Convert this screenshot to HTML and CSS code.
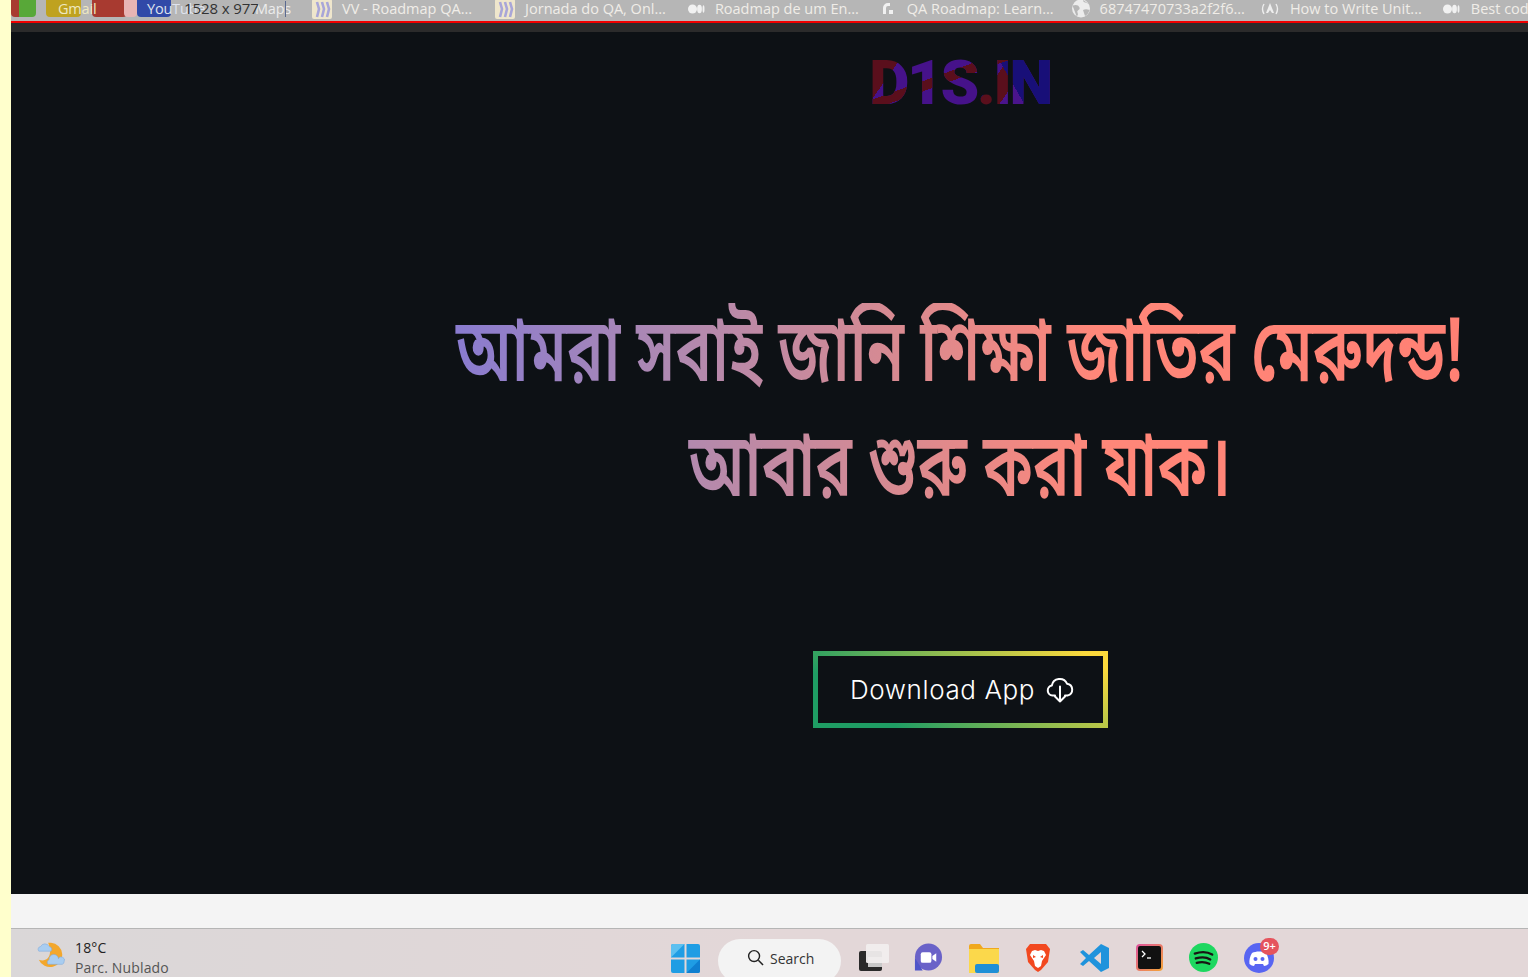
FILE: index.html
```html
<!DOCTYPE html>
<html lang="bn">
<head>
<meta charset="utf-8">
<title>D1S.IN</title>
<link rel="stylesheet" href="styles.css">
</head>
<body>
<div class="edge"></div>
<div class="window">
  <nav class="bookmarks">
    <span class="tile tile-green"></span>
    <span class="tile tile-yellow"></span>
    <span class="tile tile-red"></span>
    <span class="tile tile-pink"></span>
    <span class="tile tile-blue"></span>
    <span class="bm-label bm-gmail">Gmail</span>
    <span class="bm-label bm-youtube">YouTube</span>
    <span class="bm-label bm-maps">Maps</span>
    <span class="size-tip">1528 x 977</span>
    <span class="caret"></span>
    <a class="bm bm-first">
      <svg class="bm-icon" viewBox="0 0 20 20"><rect width="20" height="20" rx="2" fill="#efe6cc"/><path d="M5 3l2 7-2 8M10 3l2 7-2 8M15 3l2 7-2 8" fill="none" stroke="#a9a6d8" stroke-width="2.600"/></svg>
      <span class="bm-text">VV - Roadmap QA...</span>
    </a>
    <a class="bm bm-second">
      <svg class="bm-icon" viewBox="0 0 20 20"><rect width="20" height="20" rx="2" fill="#efe6cc"/><path d="M5 3l2 7-2 8M10 3l2 7-2 8M15 3l2 7-2 8" fill="none" stroke="#a9a6d8" stroke-width="2.600"/></svg>
      <span class="bm-text">Jornada do QA, Onl...</span>
    </a>
    <a class="bm bm-medium">
      <svg class="bm-icon" viewBox="0 0 20 20"><circle cx="5.500" cy="10" r="4.500" fill="#f1f1f1"/><ellipse cx="12.500" cy="10" rx="2.400" ry="4.200" fill="#f1f1f1"/><ellipse cx="16.500" cy="10" rx="1" ry="3.800" fill="#f1f1f1"/></svg>
      <span class="bm-text">Roadmap de um En...</span>
    </a>
    <a class="bm bm-rm">
      <svg class="bm-icon" viewBox="0 0 20 20"><path d="M2 15V9a5 5 0 0 1 5-5h2v3H7a2 2 0 0 0-2 2v6z" fill="#f1f1f1"/><rect x="8" y="11" width="4" height="4" fill="#f1f1f1"/></svg>
      <span class="bm-text">QA Roadmap: Learn...</span>
    </a>
    <a class="bm bm-globe">
      <svg class="bm-icon" viewBox="0 0 20 20"><circle cx="10" cy="9.500" r="9" fill="#ececec"/><path d="M1.500 6.500c3-1 6-1 7 2s-3 2-2 5 0 3-1 3.500M12 1c0 3 4 2.500 6 4M12 11c2-1 4-1 6.500 0-1 3-2 5-4.500 6z" fill="#b6b6b6"/></svg>
      <span class="bm-text">68747470733a2f2f6...</span>
    </a>
    <a class="bm bm-angular">
      <svg class="bm-icon" viewBox="0 0 20 20"><path d="M4 5q-3 5 0 10M16 5q3 5 0 10" fill="none" stroke="#eee" stroke-width="1.400"/><path d="M10 4l-4 10h2l2-3 2 3h2z" fill="#eee"/></svg>
      <span class="bm-text">How to Write Unit...</span>
    </a>
    <a class="bm bm-last">
      <svg class="bm-icon" viewBox="0 0 20 20"><circle cx="5.500" cy="10" r="4.500" fill="#f1f1f1"/><ellipse cx="12.500" cy="10" rx="2.400" ry="4.200" fill="#f1f1f1"/><ellipse cx="16.500" cy="10" rx="1" ry="3.800" fill="#f1f1f1"/></svg>
      <span class="bm-text">Best cod</span>
    </a>
  </nav>
  <div class="toolbar-strip"></div>
  <main class="page">
    <div class="spacer"></div>
    <section class="hero">
      <div class="logo">D1S.IN</div>
      <h1 class="headline">আমরা সবাই জানি শিক্ষা জাতির মেরুদন্ড!<br>আবার শুরু করা যাক।</h1>
      <a class="download">
        <span>Download App</span>
        <svg class="cloud" viewBox="0 0 28 28"><path d="M9 19.500H6.500a5 5 0 0 1-.7-9.900A8 8 0 0 1 21 7.700a6 6 0 0 1 .5 11.800H19" fill="none" stroke="#fff" stroke-width="2" stroke-linecap="round" stroke-linejoin="round"/><path d="M14 10.500v15M9 20.500l5 5 5-5" fill="none" stroke="#fff" stroke-width="2" stroke-linecap="round" stroke-linejoin="round"/></svg>
      </a>
    </section>
  </main>
  <div class="status-strip"></div>
  <footer class="taskbar">
    <div class="weather">
      <svg class="weather-icon" viewBox="0 0 32 32"><path d="M16 4a13 13 0 1 1-13 18c7 3 16-2 10-18z" fill="#f3a72c"/><g fill="#a9cdf0" stroke="#7ea9dc" stroke-width=".6"><path d="M3 13a3 3 0 0 1 2-5 5 5 0 0 1 9 0 3 3 0 0 1 2 5z"/><path d="M13 27a3 3 0 0 1 1-5 5 5 0 0 1 10-1 3 3 0 0 1 6 3 3 3 0 0 1-2 3z"/></g></svg>
      <div class="weather-text">
        <div class="temp">18°C</div>
        <div class="sky">Parc. Nublado</div>
      </div>
    </div>
    <div class="apps">
      <svg class="app app-win" viewBox="0 0 29 29"><path d="M0 2a2 2 0 0 1 2-2h11.500v13.500H0z" fill="#1f9de4"/><path d="M0 13.500V2a2 2 0 0 1 2-2h11.500z" fill="#5cc0f0"/><path d="M15.500 0H27a2 2 0 0 1 2 2v11.500H15.500z" fill="#1f9de4"/><path d="M0 15.500h13.500V29H2a2 2 0 0 1-2-2z" fill="#1f9de4"/><path d="M15.500 15.500H29V27a2 2 0 0 1-2 2H15.500z" fill="#1f9de4"/><path d="M29 15.500V27a2 2 0 0 1-2 2H15.500z" fill="#0f7fd0"/></svg>
      <div class="search">
        <svg class="search-icon" viewBox="0 0 18 18"><circle cx="7.500" cy="7.500" r="5.800" fill="none" stroke="#222" stroke-width="1.500"/><path d="M12 12l5 5" stroke="#222" stroke-width="1.600"/></svg>
        <span>Search</span>
      </div>
      <svg class="app app-views" viewBox="0 0 30 30"><rect x="0" y="8" width="23" height="20" rx="2" fill="#2a2a2a"/><path d="M9 24V14h14v10z" fill="#c8c8c8"/><rect x="7" y="1" width="23" height="19" rx="1.500" fill="#f1eeee" opacity=".95"/></svg>
      <svg class="app app-meet" viewBox="0 0 30 30"><circle cx="15" cy="14" r="14" fill="#6a62c8"/><path d="M1 15v13h8z" fill="#4f55c9"/><rect x="7" y="9" width="11" height="11" rx="2" fill="#fff"/><path d="M19 13l4-3v9l-4-3z" fill="#fff"/></svg>
      <svg class="app app-files" viewBox="0 0 30 30"><path d="M0 3a2 2 0 0 1 2-2h9l3 4h16v25H0z" fill="#f0a81e"/><rect y="6" width="30" height="24" fill="#fbd84b"/><rect x="6" y="21" width="24" height="9" rx="2" fill="#1f8fd6"/></svg>
      <svg class="app app-brave" viewBox="0 0 26 30"><path d="M5 1h16l4 5-2 13-7 8-3 2-3-2-7-8L1 6z" fill="#f2481f"/><path d="M7 8l3-1 3 1 3-1 3 1 2 4-4 6-1 5-3 2-3-2-1-5-4-6z" fill="#fff"/><path d="M8 12l3 2-3 1zM18 12l-3 2 3 1z" fill="#f2481f"/></svg>
      <svg class="app app-code" viewBox="0 0 30 30"><path d="M22 1l8 4v20l-8 4-12-11-6 5-3-2 6-6-6-6 3-2 6 5z" fill="#1f93dc"/><path d="M22 9l-7 6 7 6z" fill="#e3d7d8"/></svg>
      <svg class="app app-term" viewBox="0 0 27 27"><defs><linearGradient id="tb" x1="0" y1="0" x2="1" y2="1"><stop offset="0" stop-color="#e0559a"/><stop offset="1" stop-color="#f4a23a"/></linearGradient></defs><rect x="1" y="1" width="25" height="25" rx="3" fill="#111" stroke="url(#tb)" stroke-width="2"/><path d="M6 7l3 3-3 3" fill="none" stroke="#fff" stroke-width="1.300"/><path d="M11 14h4" stroke="#fff" stroke-width="1.300"/></svg>
      <svg class="app app-spotify" viewBox="0 0 30 30"><circle cx="15" cy="15" r="15" fill="#1ed760"/><path d="M6 11c6-2 13-2 18 1M7 16c5-1.500 11-1.500 15 1M8 20.500c4-1 9-1 13 1" fill="none" stroke="#191414" stroke-width="2.400" stroke-linecap="round"/></svg>
      <div class="discord">
        <svg class="app-discord" viewBox="0 0 30 30"><circle cx="15" cy="15" r="15" fill="#5865f2"/><path d="M8 10c4-2 10-2 14 0 2 3 3 7 2.500 11-1.500 1-3 2-4.500 2l-1-2h-8l-1 2c-1.500 0-3-1-4.500-2C5 17 6 13 8 10z" fill="#fff"/><circle cx="11.500" cy="16" r="2" fill="#5865f2"/><circle cx="18.500" cy="16" r="2" fill="#5865f2"/></svg>
        <span class="badge">9+</span>
      </div>
    </div>
  </footer>
</div>
</body>
</html>
```
FILE: styles.css
```css
* { box-sizing: border-box; }
html, body { margin: 0; height: 100%; overflow: hidden; }
body { display: flex; width: 1528px; height: 977px; background: #ffffcc; font-family: "Open Sans", "Noto Sans", sans-serif; }
.edge { width: 11px; flex: none; }
.window { flex: 1; min-width: 0; display: flex; flex-direction: column; }

.bookmarks { position: relative; flex: none; height: 23px; display: flex; align-items: flex-start; background: #b6b6b6; border-bottom: 2px solid #f00000; overflow: hidden; padding-left: 301px; white-space: nowrap; }
.bm { display: flex; align-items: center; height: 17px; color: #f0ede8; font-size: 14.500px; flex: none; }
.bm-icon { width: 20px; height: 20px; flex: none; }
.bm-text { line-height: 17px; }
.bm-first { gap: 10px; }
.bm-second { margin-left: 23px; gap: 10px; }
.bm-medium { margin-left: 21px; gap: 8px; }
.bm-rm { margin-left: 22px; gap: 6px; }
.bm-globe { margin-left: 17px; gap: 9px; }
.bm-angular { margin-left: 15px; gap: 10px; }
.bm-last { margin-left: 20px; gap: 9px; }

.tile { position: absolute; top: -6px; height: 23px; border-radius: 4px; }
.tile-green { left: 0; width: 25px; background: linear-gradient(90deg, #a83a30 0 30%, #58a838 30%); }
.tile-yellow { left: 35px; width: 35px; background: #bfa21f; }
.tile-red { left: 81px; width: 35px; background: #a83a30; }
.tile-pink { left: 113px; width: 13px; background: #e8b4b4; }
.tile-blue { left: 126px; width: 34px; background: #3149a8; }
.bm-label { position: absolute; top: 0; line-height: 17px; font-size: 14.500px; color: #eee8c0; letter-spacing: -0.2px; }
.bm-gmail { left: 47px; }
.bm-youtube { left: 136px; color: #dfe3ee; }
.bm-maps { left: 244px; color: #ececec; }
.size-tip { position: absolute; left: 173px; top: 0; line-height: 17px; font-size: 15px; color: #333; letter-spacing: -0.1px; }
.caret { position: absolute; left: 274px; top: 1px; width: 1px; height: 16px; background: #5a6a90; }

.toolbar-strip { flex: none; height: 9px; background: #2b2b2b; }

.page { flex: none; height: 862px; display: flex; background: #0d1115; }
.spacer { flex: none; width: 381px; }
.hero { flex: 1; min-width: 0; display: flex; flex-direction: column; align-items: center; }

.logo { margin-top: 20px; font-family: "Roboto", "Liberation Sans", sans-serif; font-weight: 900; font-size: 62px; line-height: 62px; letter-spacing: -2.400px; color: transparent;
  background:
    linear-gradient(160deg, transparent 0 38%, #5a0f1c 38% 46%, transparent 46%),
    linear-gradient(60deg, transparent 0 74%, #180f78 74% 100%),
    linear-gradient(125deg, #5a0f1c 0 16%, #46128a 16% 64%, #5a0f1c 64% 74%, #4a148c 74%);
  -webkit-background-clip: text; background-clip: text; }

.headline { align-self: stretch; margin: 189px 0 0; white-space: nowrap; text-align: center; font-family: "Noto Sans Bengali", "Noto Serif Bengali", "Noto Sans", sans-serif; font-weight: 600; font-size: 61.300px; line-height: 78.600px; color: transparent; transform: scaleY(1.45); transform-origin: top center;
  background: linear-gradient(90deg, #8a7ccf 6%, #b089b0 25%, #d98a90 45%, #ff8779 62%, #ff7f73 100%);
  -webkit-background-clip: text; background-clip: text; }

.download { margin-top: 191px; width: 295px; height: 77px; flex: none; display: flex; align-items: center; justify-content: center; gap: 11px; padding-left: 4px; border: 5px solid; border-image: linear-gradient(35deg, #1f9d64 20%, #fbd93c 95%) 1; color: #fff; font-family: "Inter", sans-serif; font-weight: 300; font-size: 26px; letter-spacing: 0.6px; }
.cloud { width: 28px; height: 28px; flex: none; }

.status-strip { flex: none; height: 34px; background: #f4f4f4; }

.taskbar { flex: none; height: 49px; display: flex; background: linear-gradient(90deg, #dad7d8, #e3d7d8 50%); border-top: 1px solid #b5b5b5; overflow: hidden; }
.weather { flex: none; width: 660px; display: flex; gap: 9px; padding: 10px 0 0 25px; }
.weather-icon { width: 30px; height: 30px; flex: none; }
.weather-text { font-size: 14px; line-height: 20px; letter-spacing: 0.15px; margin-top: -1px; }
.temp { color: #222; }
.sky { color: #555; }

.apps { display: flex; align-items: flex-start; }
.app { flex: none; }
.app-win { width: 29px; height: 29px; margin-top: 15px; }
.search { margin: 10px 0 0 18px; width: 123px; height: 44px; flex: none; display: flex; align-items: flex-start; gap: 6px; padding: 10px 0 0 29px; border-radius: 22px; background: #f3f3f3; font-size: 14px; color: #333; }
.search-icon { width: 17px; height: 17px; flex: none; }
.app-views { width: 30px; height: 30px; margin: 14px 0 0 18px; }
.app-meet { width: 29px; height: 30px; margin: 14px 0 0 25px; }
.app-files { width: 30px; height: 30px; margin: 14px 0 0 26px; }
.app-brave { width: 26px; height: 30px; margin: 14px 0 0 26px; }
.app-code { width: 30px; height: 30px; margin: 14px 0 0 28px; }
.app-term { width: 27px; height: 27px; margin: 15px 0 0 27px; }
.app-spotify { width: 29px; height: 29px; margin: 14px 0 0 26px; }
.discord { position: relative; flex: none; width: 30px; height: 30px; margin: 14px 0 0 26px; }
.app-discord { width: 30px; height: 30px; display: block; }
.badge { position: absolute; top: -5px; left: 16px; width: 19px; height: 17px; border-radius: 9px; background: #e5545d; color: #fff; font-size: 11px; line-height: 16px; font-weight: 600; text-align: center; }
```
